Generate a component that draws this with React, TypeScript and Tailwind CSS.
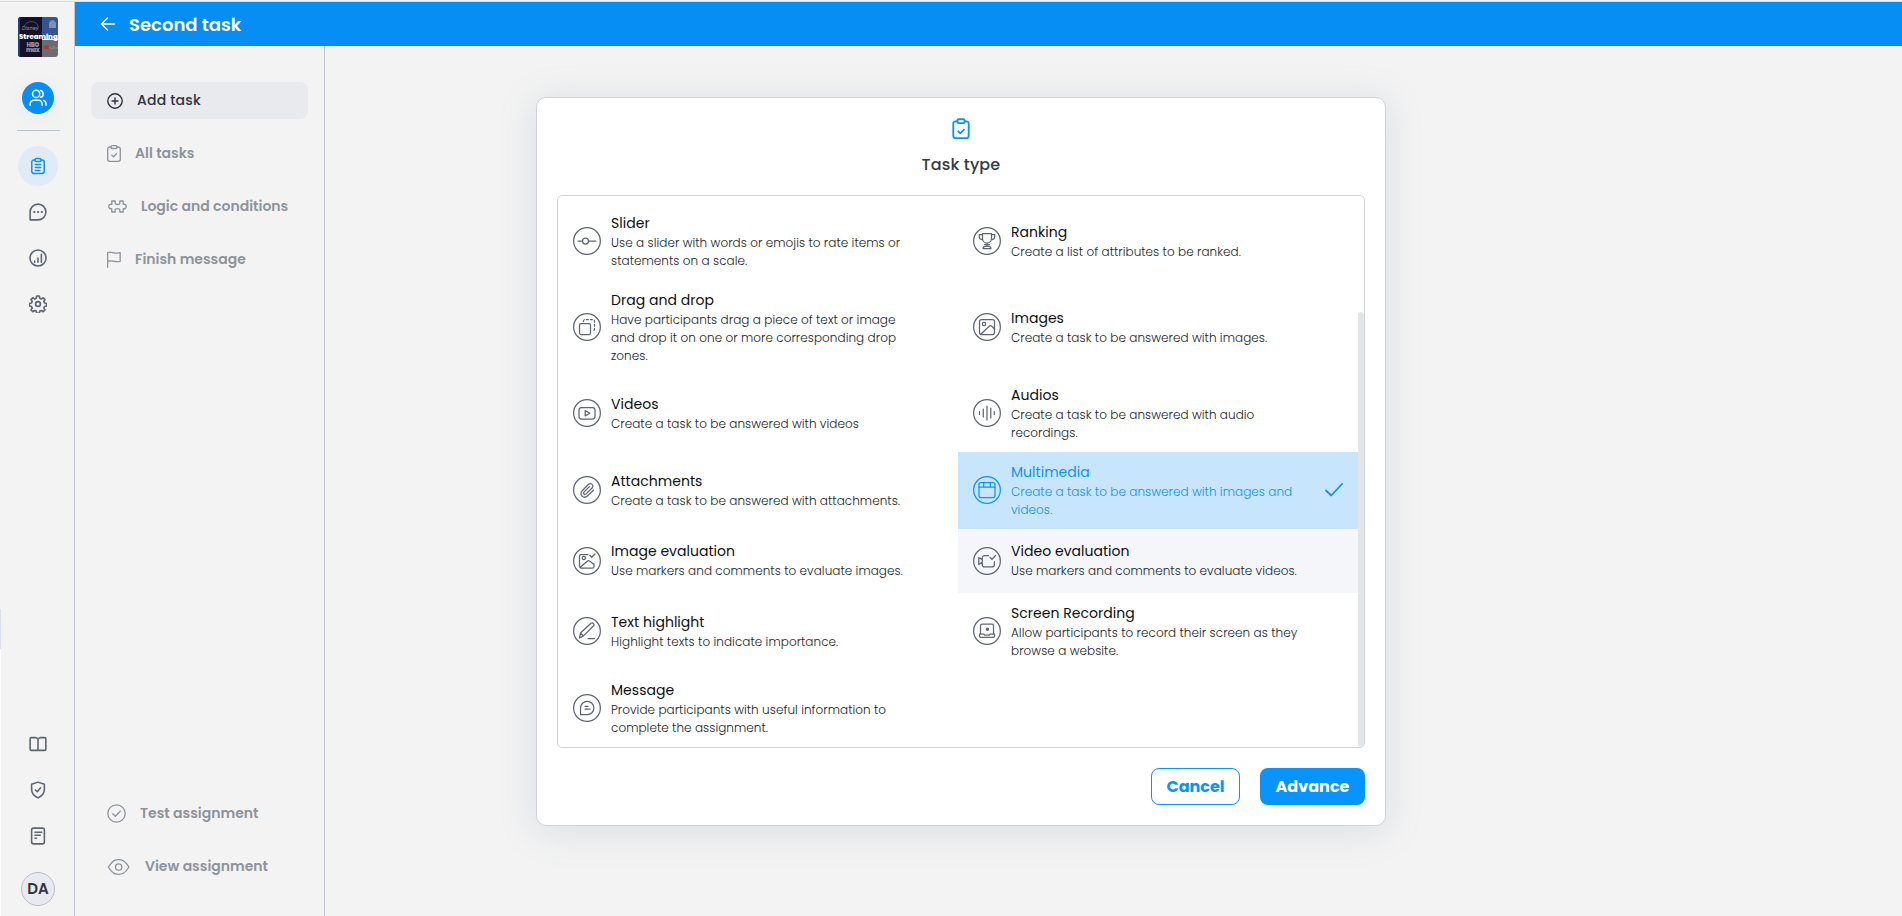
import React from 'react';
import clsx from 'clsx';

type IconProps = { className?: string };

interface TaskType {
  title: string;
  lines: string[];
  icon: React.ReactNode;
  selected?: boolean;
  hovered?: boolean;
}

function Svg({ className, box = 24, width = 1.5, children }: IconProps & { box?: number; width?: number; children: React.ReactNode }) {
  return (
    <svg viewBox={`0 0 ${box} ${box}`} className={clsx('block shrink-0', className)} fill="none" stroke="currentColor" strokeWidth={width} strokeLinecap="round" strokeLinejoin="round">
      {children}
    </svg>
  );
}

function ClipboardCheck({ className }: IconProps) {
  return (
    <Svg className={className} width={2}>
      <path d="M8 3.600H6A2.400 2.400 0 0 0 3.600 6v13.500A2.400 2.400 0 0 0 6 22h12a2.400 2.400 0 0 0 2.400-2.500V6A2.400 2.400 0 0 0 18 3.600h-2" />
      <rect x="8" y="1.400" width="8" height="4.200" rx="1.500" />
      <path d="m9 14.500 2.200 2.200 4-4" />
    </Svg>
  );
}

/* Left rail */
function Rail() {
  return (
    <aside className="relative w-[75px] shrink-0 border-r border-[#c1c5cf] flex flex-col items-center pl-[2px] pt-[15px] pb-[10px] text-[#5d6472]">
      {/* edge of the collapsed drawer */}
      <div className="absolute left-0 top-[607px] bottom-0 w-px bg-white">
        <div className="h-10 bg-[#dcdfec]" />
      </div>

      <div className="relative w-10 h-10 rounded-[3px] overflow-hidden">
        <svg viewBox="0 0 40 40" className="w-10 h-10">
          <path d="M0 0h24v40H0z" fill="#171126" />
          <path d="M24 0h16v22H24z" fill="#34558f" />
          <path d="M24 23h16v17H24z" fill="#6b6c6f" />
          <path d="M0 0h2v40H0z" fill="#24416f" />
          <path d="M6 9c4-7 14-5 14 1" fill="none" stroke="#34506f" />
          <path d="M31 11V7c0-5 7-5 7 0v4" fill="#7d91b5" />
          <rect x="26" y="28.500" width="5" height="3.500" rx="1" fill="#a83b2c" />
        </svg>
        <span className="absolute left-[4px] top-[8px] text-[5px] leading-[7px] italic font-medium text-[#7d8698]">Disney</span>
        <span className="absolute left-[8px] top-[26px] text-[6px] leading-[5px] font-black tracking-[-0.4px] text-[#918b98] text-center">HBO<br />max</span>
        <span className="absolute left-[31px] top-[28px] text-[4px] leading-[5px] text-[#999]">tube</span>
        <span className="absolute left-px top-[15px] text-[7px] leading-[10px] font-extrabold text-white">Streaming</span>
      </div>

      <div className="mt-[25px] w-8 h-8 rounded-full bg-[#068ef5] text-white flex items-center justify-center shadow-[0_4px_20px_rgba(120,150,200,0.1)]">
        <Svg className="w-[18px] h-[18px]" width={2}>
          <circle cx="9.500" cy="6.500" r="4.800" />
          <path d="M1.500 21.500v-1.500a5 5 0 0 1 5-5h6a5 5 0 0 1 5 5v1.500M15.500 1.900a4.800 4.800 0 0 1 0 9.200M19.500 15.200a5 5 0 0 1 3.200 4.800v1.500" />
        </Svg>
      </div>
      <div className="mt-4 w-[43px] h-px bg-[#bcc3cd]" />

      <div className="mt-[15px] w-10 h-10 rounded-full bg-[#e0ebf5] text-[#168ff0] flex items-center justify-center">
        <Svg className="w-[18px] h-[18px]" width={2}>
          <path d="M8 4H6.500A2.800 2.800 0 0 0 3.700 6.800v12.400A2.800 2.800 0 0 0 6.500 22h11a2.800 2.800 0 0 0 2.800-2.800V6.800A2.800 2.800 0 0 0 17.500 4H16" />
          <rect x="8" y="2" width="8" height="4" rx="1.800" />
          <path d="M8.500 10h7M8.500 14h7M8.500 18h6" />
        </Svg>
      </div>

      <div className="mt-[17px] flex flex-col gap-7">
        <Svg className="w-[18px] h-[18px]" width={2.1}>
          <path d="M1.500 22.500V12A10.500 10.500 0 1 1 12 22.500z" />
          <path d="M7 12h.2M12 12h.2M17 12h.2" strokeWidth="2.900" />
        </Svg>
        <Svg className="w-[18px] h-[18px]" width={2.1}>
          <circle cx="12" cy="12" r="10.700" />
          <path d="M7.500 16v1.500M12 12v5.500M16.500 7v10.500" />
        </Svg>
        <Svg className="w-[18px] h-[18px]" width={2.2}>
          <circle cx="12" cy="12" r="3.200" />
          <path d="M10.300 1.300h3.400l.7 3.100 2 .9 2.600-1.600 2.300 2.400-1.500 2.600.8 1.900 2.900.7v3.400l-2.900.7-.8 2 1.500 2.500-2.400 2.400-2.500-1.600-2 .8-.7 3h-3.400l-.7-3-2-.8-2.500 1.600-2.400-2.400 1.600-2.500-.9-2-2.900-.7v-3.400l2.900-.7.900-1.900-1.600-2.600 2.400-2.400 2.500 1.600 2-.9z" />
        </Svg>
      </div>

      <div className="mt-auto flex flex-col gap-7 items-center">
        <Svg className="w-[18px] h-[18px]" width={2.1}>
          <path d="M12 5v15M1.500 19V5a1.500 1.500 0 0 1 1.500-1.500h6L12 5l3-1.500h6A1.500 1.500 0 0 1 22.500 5v14a1.500 1.500 0 0 1-1.500 1.500H3A1.500 1.500 0 0 1 1.500 19z" />
        </Svg>
        <Svg className="w-[18px] h-[18px]" width={2.1}>
          <path d="M12 1.500 3.500 4.300v7c0 5.500 4 9 8.500 11.200 4.500-2.200 8.500-5.700 8.500-11.200v-7z" />
          <path d="m8.500 12 2.500 2.300L15.500 9" />
        </Svg>
        <Svg className="w-[18px] h-[18px]" width={2.1}>
          <rect x="3.500" y="1.500" width="17" height="21" rx="2.500" />
          <path d="M8 7h9M8 11h7M8 15h2" />
        </Svg>
      </div>
      <div className="mt-[27px] w-[34px] h-[34px] rounded-full border border-[#b9bec8] bg-[#e8eaef] flex items-center justify-center text-[15px] font-semibold text-[#30343f]">DA</div>
    </aside>
  );
}

interface MenuItemProps {
  icon: React.ReactNode;
  label: string;
  gap: string;
  active?: boolean;
}

function MenuItem({ icon, label, gap, active }: MenuItemProps) {
  return (
    <button className={clsx('h-[37px] w-[217px] pl-4 flex items-center rounded-lg text-[14px] text-left whitespace-nowrap', gap, active ? 'bg-[#e8eaee] text-[#2f3340] font-medium tracking-[0.2px]' : 'text-[#8d939c] font-semibold')}>
      {icon}
      <span>{label}</span>
    </button>
  );
}

function TaskMenu() {
  return (
    <nav className="w-[250px] shrink-0 border-r border-[#c1c5cf] pl-4 pt-9 pb-[31px] flex flex-col gap-4">
      <MenuItem
        active
        label="Add task"
        gap="gap-[14px]"
        icon={<Svg className="w-4 h-4" box={16} width={1.4}><circle cx="8" cy="8" r="7.200" /><path d="M8 5v6M5 8h6" /></Svg>}
      />
      <MenuItem
        label="All tasks"
        gap="gap-[14px]"
        icon={
          <svg viewBox="0 0 14 17" className="w-[14px] h-[17px] shrink-0" fill="none" stroke="currentColor" strokeWidth="1.300" strokeLinecap="round" strokeLinejoin="round">
            <path d="M4 2H2.700a2 2 0 0 0-2 2v10.300a2 2 0 0 0 2 2h8.600a2 2 0 0 0 2-2V4a2 2 0 0 0-2-2H10" />
            <rect x="4" y=".700" width="6" height="2.800" rx="1" />
            <path d="m4.800 10.300 1.700 1.500 3-3" />
          </svg>
        }
      />
      <MenuItem
        label="Logic and conditions"
        gap="gap-[14px]"
        icon={
          <svg viewBox="0 0 19 13" className="w-[19px] h-[13px] ml-px shrink-0" fill="none" stroke="currentColor" strokeWidth="1.300" strokeLinejoin="round">
            <path d="M3.800 1h3.400v2.200c0 1.700 4.600 1.700 4.600 0V1h3.400v3.300c1.600-.4 3.100.6 3.100 2.200s-1.500 2.600-3.100 2.200V12h-3.400V9.800c0-1.700-4.600-1.700-4.600 0V12H3.800V8.700C2.200 9.100.7 8.100.7 6.500s1.500-2.600 3.100-2.200z" />
          </svg>
        }
      />
      <MenuItem
        label="Finish message"
        gap="gap-[14px]"
        icon={
          <svg viewBox="0 0 14 17" className="w-[14px] h-[17px] shrink-0" fill="none" stroke="currentColor" strokeWidth="1.300" strokeLinecap="round" strokeLinejoin="round">
            <path d="M.7 16.300V1.500c4-1.800 6 2 12.500.2v8.600C7 12 5 8.500.7 10.300" />
          </svg>
        }
      />
      <div className="mt-auto flex flex-col gap-4">
        <MenuItem
          label="Test assignment"
          gap="gap-[14px]"
          icon={<Svg className="w-[19px] h-[19px]" box={19} width={1.3}><circle cx="9.500" cy="9.500" r="8.700" /><path d="m5.800 9.800 2.500 2.400 5-5" /></Svg>}
        />
        <MenuItem
          label="View assignment"
          gap="gap-[15px]"
          icon={
            <svg viewBox="0 0 23 16" className="w-[23px] h-4 shrink-0" fill="none" stroke="currentColor" strokeWidth="1.300">
              <path d="M1.300 8C6 .8 8.500.7 11.700.7S17.500 1 22 8c-4.500 7-7 7.300-10.300 7.300S6 15.200 1.300 8z" />
              <circle cx="11.700" cy="8" r="3.200" />
            </svg>
          }
        />
      </div>
    </nav>
  );
}

/* Glyphs drawn inside the 28px ring of each option */
const slider = <><path d="M5 14h4.500M15.500 14h7.500" /><circle cx="12.500" cy="14" r="3" /></>;
const trophy = <><path d="M9.500 6.500h9v5a4.500 4.500 0 0 1-9 0zM9.500 7.500H6.300V10c0 1.700 1.500 2.500 3.200 2.500M18.500 7.500h3.200V10c0 1.700-1.500 2.500-3.200 2.500M14 16v2.500M11.500 17.500h5M10 21.500c0-2 1.500-2.500 4-2.500s4 .5 4 2.500z" /></>;
const dragDrop = <><rect x="6.500" y="10.500" width="11" height="11" rx="1.500" /><path d="M10.500 8.500V8A1.800 1.800 0 0 1 12 6.500h8A1.800 1.800 0 0 1 21.500 8v8a1.800 1.800 0 0 1-1.800 1.800" strokeDasharray="2 2" /></>;
const image = <><rect x="6.500" y="6.500" width="15" height="15" rx="2" /><circle cx="11" cy="11" r="1.700" /><path d="m8 21 8.500-8c.7-.6 1.300-.6 2 0l3 3" /></>;
const video = <><rect x="6" y="8.500" width="16" height="11.500" rx="2.500" /><path d="m12.200 11.500 4.600 2.700-4.600 2.700z" /></>;
const audio = <path d="M6.500 12.500v3M10.300 10v8M14 7v14M17.800 9v10M21.300 12.500v3" />;
const clip = <path d="m20.500 14.200-5.800 5.600c-3.800 3.600-9.300-1-5.600-5l6-6.100c2.800-2.700 6.500.7 3.800 3.500l-5.800 5.700c-1.600 1.500-3.500-.4-2-2l5.300-5.300" />;
const multimedia = <><rect x="6" y="6.500" width="16" height="15" rx="2" /><path d="M6 11h16M10.700 6.500v4.200M17.300 6.500v4.200" /></>;
const imageCheck = <><path d="M15 7.500H8A1.500 1.500 0 0 0 6.500 9v10.500A1.500 1.500 0 0 0 8 21h11.500a1.500 1.500 0 0 0 1.500-1.500V16.500M7 20.500l7.500-6.500c.8-.6 1.400-.6 2.100 0l4.400 3.500M16.800 8.300l2 2L22 7" /><circle cx="10.800" cy="11" r="1.600" /></>;
const videoCheck = <><path d="M15.500 8.500h-4A2.200 2.200 0 0 0 9.300 10.700v7A2.200 2.200 0 0 0 11.500 19.900h7.700a2.200 2.200 0 0 0 2.200-2.200V14.500M9.300 12.600 5.800 10.500v7l3.500-2.300M17 10.500l2 1.800 3.500-3.800" /></>;
const marker = <><path d="m6.500 21 1-5L18 6.300c1.700-1.300 4 .8 2.600 2.500L10.500 18.900zM7.500 16l3 2.900M15 21.500h6.500" /></>;
const screen = <><path d="M7.500 16.500v-8A1.500 1.500 0 0 1 9 7h10a1.500 1.500 0 0 1 1.500 1.500v8M6.500 17h4l1.200 1h4.600l1.200-1h4v2a1.300 1.300 0 0 1-1.300 1.300H7.800A1.300 1.300 0 0 1 6.500 19z" /><circle cx="14.500" cy="12.200" r="1.100" fill="currentColor" /></>;
const message = <><path d="M7.500 20.700V14a6.700 6.700 0 1 1 6.700 6.700zM12 12.300h3M12 15.200h5" /></>;

const taskTypes: TaskType[] = [
  { title: 'Slider', lines: ['Use a slider with words or emojis to rate items or', 'statements on a scale.'], icon: slider },
  { title: 'Ranking', lines: ['Create a list of attributes to be ranked.'], icon: trophy },
  { title: 'Drag and drop', lines: ['Have participants drag a piece of text or image', 'and drop it on one or more corresponding drop', 'zones.'], icon: dragDrop },
  { title: 'Images', lines: ['Create a task to be answered with images.'], icon: image },
  { title: 'Videos', lines: ['Create a task to be answered with videos'], icon: video },
  { title: 'Audios', lines: ['Create a task to be answered with audio', 'recordings.'], icon: audio },
  { title: 'Attachments', lines: ['Create a task to be answered with attachments.'], icon: clip },
  { title: 'Multimedia', lines: ['Create a task to be answered with images and', 'videos.'], icon: multimedia, selected: true },
  { title: 'Image evaluation', lines: ['Use markers and comments to evaluate images.'], icon: imageCheck },
  { title: 'Video evaluation', lines: ['Use markers and comments to evaluate videos.'], icon: videoCheck, hovered: true },
  { title: 'Text highlight', lines: ['Highlight texts to indicate importance.'], icon: marker },
  { title: 'Screen Recording', lines: ['Allow participants to record their screen as they', 'browse a website.'], icon: screen },
  { title: 'Message', lines: ['Provide participants with useful information to', 'complete the assignment.'], icon: message },
];

function TaskOption({ task }: { task: TaskType }) {
  return (
    <div className={clsx('flex items-center px-[15px] pb-px', task.selected && 'bg-[#c8e5fe] text-[#0d93fb]', task.hovered && 'bg-[#f5f6fa]')}>
      <Svg box={28} width={1.25} className={clsx('w-7 h-7', !task.selected && 'text-[#5f6573]')}>
        <circle cx="14" cy="14" r="13.350" />
        {task.icon}
      </Svg>
      <div className="ml-[10px]">
        <div className={clsx('text-[14px] leading-[21px] tracking-[0.03px]', !task.selected && 'text-[#0e0f11]')}>{task.title}</div>
        <div className={clsx('text-[12px] leading-[18px] font-light tracking-[0.05px] whitespace-nowrap', !task.selected && 'text-[#1b1c1f]')}>
          {task.lines.map((line) => <div key={line}>{line}</div>)}
        </div>
      </div>
      {task.selected && (
        <svg viewBox="0 0 18 14" className="ml-auto w-[18px] h-[14px]" fill="none" stroke="currentColor" strokeWidth="1.800" strokeLinecap="round" strokeLinejoin="round">
          <path d="m1 7.500 5.200 5L17 1" />
        </svg>
      )}
    </div>
  );
}

function TaskTypeDialog() {
  return (
    <section className="w-[850px] h-[729px] rounded-[10px] border border-[#d0d4da] bg-white px-5 py-5 flex flex-col items-center shadow-[0_4px_36px_rgba(125,140,175,0.22)]">
      <ClipboardCheck className="w-[22px] h-[22px] text-[#0894ff]" />
      <h2 className="mt-[13px] text-[16px] leading-6 font-medium tracking-[0.15px] text-[#363a45]">Task type</h2>
      <div className="mt-[18px] w-[808px] h-[553px] rounded-[5px] border border-[#d0d4da] overflow-hidden flex items-end">
        <div className="w-[800px] shrink-0 grid grid-cols-2 grid-rows-[77px_95px_77px_77px_64px_77px_77px]">
          {taskTypes.map((task) => <TaskOption key={task.title} task={task} />)}
        </div>
        <div className="w-[6px] h-[435px] rounded-[3px] bg-[#e3e6e9]" />
      </div>
      <div className="mt-5 self-end flex gap-5 text-[16px] font-bold">
        <button className="w-[89px] h-[37px] rounded-lg border border-[#0894ff] text-[#0894ff]">Cancel</button>
        <button className="w-[105px] h-[37px] rounded-lg bg-[#0894ff] text-white">Advance</button>
      </div>
    </section>
  );
}

export default function App() {
  return (
    <div className="h-[916px] w-[1902px] overflow-hidden bg-[#f3f3f3] pt-px font-['Poppins','Inter',sans-serif] text-[#30343f]">
      <div className="h-full border-t border-[#dddedf] flex">
        <Rail />
        <div className="flex-1 flex flex-col">
          <header className="h-11 shrink-0 bg-[#068ef5] text-white flex items-center pl-[25px] gap-[13px]">
            <Svg className="w-4 h-4" box={16} width={1.5}><path d="M14.500 8h-13M7.500 2l-6 6 6 6" /></Svg>
            <h1 className="text-[18px] font-semibold">Second task</h1>
          </header>
          <div className="flex-1 flex min-h-0">
            <TaskMenu />
            <main className="flex-1 flex justify-center items-start pt-[51px] pr-[305px]">
              <TaskTypeDialog />
            </main>
          </div>
        </div>
      </div>
    </div>
  );
}
